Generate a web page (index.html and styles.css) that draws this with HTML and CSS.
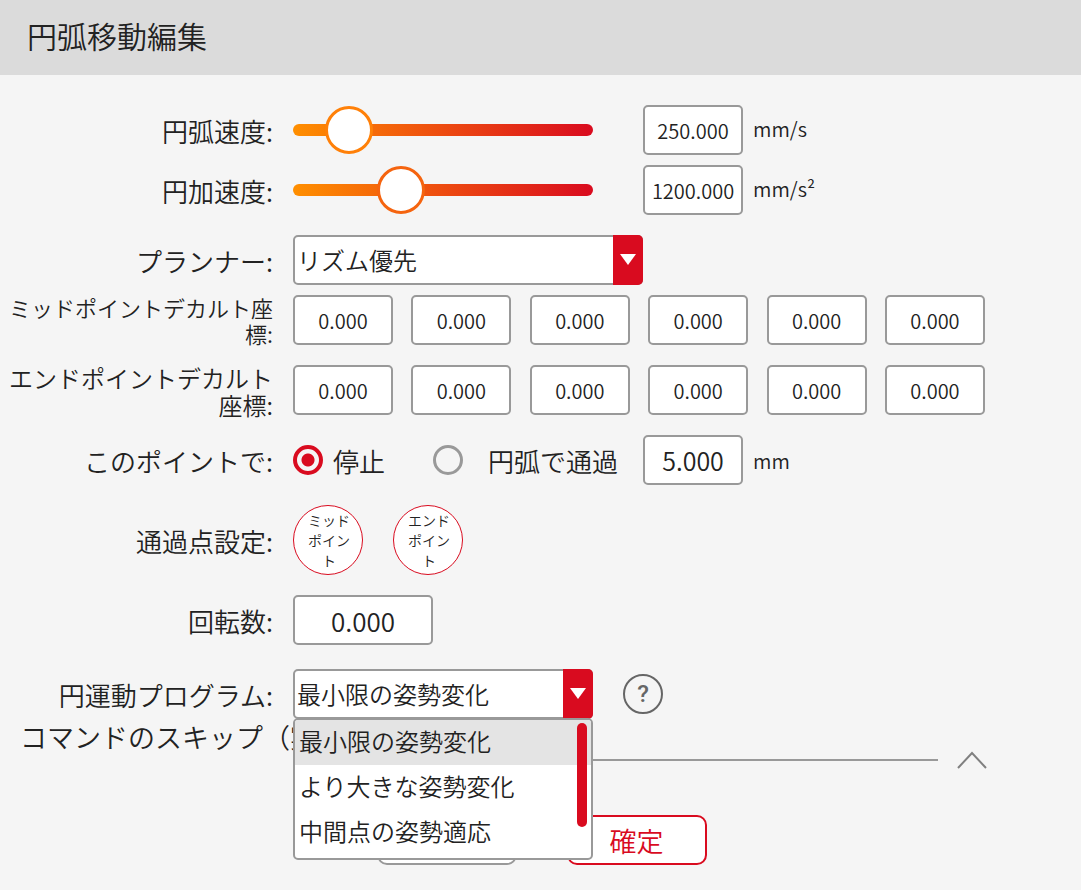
FILE: index.html
```
<!DOCTYPE html>
<html lang="ja">

<head>
    <meta charset="UTF-8">
    <meta name="viewport" content="width=device-width, initial-scale=1.0">
    <title>円弧移動編集</title>
    <link rel="stylesheet" href="styles.css">
</head>

<body>
    <header class="title-bar">
        <h1>円弧移動編集</h1>
    </header>

    <form class="form">
        <div class="row row-tight">
            <label class="row-label" for="speed">円弧速度:</label>
            <input class="slider slider-speed" type="range" id="speed" min="0" max="2000" value="250">
            <input class="value" type="text" value="250.000" aria-label="円弧速度">
            <span class="unit unit-raised">mm/s</span>
        </div>
        <div class="row">
            <label class="row-label" for="acc">円加速度:</label>
            <input class="slider slider-acc" type="range" id="acc" min="0" max="3600" value="1200">
            <input class="value" type="text" value="1200.000" aria-label="円加速度">
            <span class="unit unit-raised">mm/s²</span>
        </div>

        <div class="row row-tight">
            <label class="row-label" for="planner">プランナー:</label>
            <div class="select select-wide">
                <select id="planner">
                    <option>リズム優先</option>
                </select>
            </div>
        </div>

        <div class="row">
            <label class="row-label row-label-small" for="mid_x">ミッドポイントデカルト座標:</label>
            <div class="coords">
                <input class="value" type="text" id="mid_x" value="0.000">
                <input class="value" type="text" value="0.000">
                <input class="value" type="text" value="0.000">
                <input class="value" type="text" value="0.000">
                <input class="value" type="text" value="0.000">
                <input class="value" type="text" value="0.000">
            </div>
        </div>
        <div class="row">
            <label class="row-label row-label-medium" for="end_x">エンドポイントデカルト座標:</label>
            <div class="coords">
                <input class="value" type="text" id="end_x" value="0.000">
                <input class="value" type="text" value="0.000">
                <input class="value" type="text" value="0.000">
                <input class="value" type="text" value="0.000">
                <input class="value" type="text" value="0.000">
                <input class="value" type="text" value="0.000">
            </div>
        </div>

        <div class="row">
            <span class="row-label">このポイントで:</span>
            <input class="radio" type="radio" name="pass" id="pass_stop" checked>
            <label class="radio-label radio-label-stop" for="pass_stop">停止</label>
            <input class="radio" type="radio" name="pass" id="pass_arc">
            <label class="radio-label radio-label-arc" for="pass_arc">円弧で通過</label>
            <input class="value value-radius" type="text" value="5.000" aria-label="半径">
            <span class="unit">mm</span>
        </div>

        <div class="row row-points">
            <span class="row-label">通過点設定:</span>
            <div class="points">
                <button type="button" class="point">ミッドポイント</button>
                <button type="button" class="point">エンドポイント</button>
            </div>
        </div>

        <div class="row row-loose">
            <label class="row-label" for="turns">回転数:</label>
            <input class="value value-turns" type="text" id="turns" value="0.000">
        </div>

        <div class="row row-last">
            <label class="row-label" for="program">円運動プログラム:</label>
            <div class="select">
                <select id="program">
                    <option>最小限の姿勢変化</option>
                    <option>より大きな姿勢変化</option>
                    <option>中間点の姿勢適応</option>
                </select>
                <div class="menu">
                    <ul class="menu-list" role="listbox" aria-label="円運動プログラム">
                        <li class="menu-item active" role="option" aria-selected="true">最小限の姿勢変化</li>
                        <li class="menu-item" role="option">より大きな姿勢変化</li>
                        <li class="menu-item" role="option">中間点の姿勢適応</li>
                    </ul>
                    <div class="menu-scroll"></div>
                </div>
            </div>
            <button type="button" class="help">?</button>
        </div>
    </form>

    <div class="skip">
        <span class="skip-title">コマンドのスキップ（実</span>
        <span class="skip-line"></span>
        <button type="button" class="skip-toggle" aria-label="折りたたむ">
            <svg width="30" height="18" viewBox="0 0 30 18" fill="none" stroke="#808080" stroke-width="2">
                <path d="M1 17L15 2L29 17" />
            </svg>
        </button>
    </div>

    <div class="actions">
        <button type="button" class="btn" aria-label="キャンセル"></button>
        <button type="button" class="btn btn-ok">確定</button>
    </div>
</body>

</html>
```
FILE: styles.css
```
* {
    box-sizing: border-box;
}

body {
    margin: 0;
    background-color: #f5f5f5;
    color: #222;
    font-family: "Noto Sans CJK JP", sans-serif;
    font-size: 26px;
    font-weight: 350;
}

input,
select,
button {
    margin: 0;
    color: inherit;
    font-family: inherit;
    font-weight: inherit;
}

.title-bar {
    display: flex;
    align-items: center;
    height: 75px;
    padding: 0 27px 6px;
    background-color: #dbdbdb;
}

.title-bar h1 {
    margin: 0;
    font-size: 30px;
    font-weight: inherit;
}

.form {
    padding-top: 30px;
}

.row {
    display: flex;
    align-items: center;
    height: 50px;
    margin-bottom: 20px;
}

.row-tight {
    margin-bottom: 10px;
}

.row-points {
    height: 70px;
}

.row-loose {
    margin-bottom: 24px;
}

.row-last {
    margin-bottom: 0;
}

.row-label {
    flex: none;
    width: 273px;
    margin-right: 20px;
    padding-top: 2px;
    line-height: 40px;
    text-align: right;
}

.row-label-small {
    padding-top: 0;
    font-size: 22px;
    line-height: 26px;
}

.row-label-medium {
    font-size: 24px;
    line-height: 27px;
}

/* sliders */
.slider {
    width: 300px;
    height: 48px;
    margin-right: 50px;
    background: none;
    appearance: none;
}

.slider::-webkit-slider-runnable-track {
    height: 12px;
    border-radius: 6px;
    background: linear-gradient(to right, #ff8f00, #ed4b10 50%, #d90b1f);
}

.slider::-webkit-slider-thumb {
    width: 48px;
    height: 48px;
    margin-top: -18px;
    border: 3px solid #ff8008;
    border-radius: 50%;
    background-color: #fff;
    appearance: none;
}

.slider-acc::-webkit-slider-thumb {
    border-color: #f5640f;
}

/* number boxes */
.value {
    width: 100px;
    height: 50px;
    padding: 0;
    border: 2px solid #999;
    border-radius: 5px;
    background-color: #fff;
    font-size: 20px;
    text-align: center;
}

.value-radius {
    font-size: 25px;
}

.value-turns {
    width: 140px;
    font-size: 26px;
}

.unit {
    margin-left: 10px;
    font-size: 20px;
}

.unit-raised {
    padding-bottom: 4px;
}

.coords {
    display: flex;
    justify-content: space-between;
    width: 100%;
    max-width: 692px;
}

/* drop-downs */
.select {
    position: relative;
    display: flex;
    width: 300px;
    height: 50px;
}

.select-wide {
    width: 350px;
}

.select select {
    flex: 1;
    padding: 0 30px 2px 2px;
    border: 2px solid #999;
    border-radius: 5px;
    background-color: #fff;
    font-size: 24px;
    appearance: none;
}

.select::before {
    content: "";
    position: absolute;
    top: 0;
    right: 0;
    width: 30px;
    height: 100%;
    border-radius: 0 5px 5px 0;
    background-color: #d90b1f;
    pointer-events: none;
}

.select::after {
    content: "";
    position: absolute;
    top: 19px;
    right: 7px;
    border: 8px solid transparent;
    border-top: 11px solid #fff;
    border-bottom: none;
    pointer-events: none;
}

.menu {
    position: absolute;
    z-index: 1;
    top: 49px;
    left: 0;
    width: 100%;
    height: 142px;
    border: 2px solid #999;
    border-radius: 5px;
    background-color: #fff;
    overflow: hidden;
}

.menu-list {
    margin: 0;
    padding: 0;
    list-style: none;
}

.menu-item {
    height: 45px;
    padding-left: 4px;
    font-size: 24px;
    line-height: 42px;
}

.menu-item.active {
    background-color: #e4e4e4;
}

.menu-scroll {
    position: absolute;
    top: 3px;
    right: 4px;
    width: 10px;
    height: 104px;
    border-radius: 5px;
    background-color: #d90b1f;
}

.help {
    width: 40px;
    height: 40px;
    margin-left: 30px;
    padding: 0;
    border: 2px solid #666;
    border-radius: 50%;
    background: none;
    color: #666;
    font-family: Roboto, sans-serif;
    font-size: 24px;
    font-weight: 500;
    line-height: 36px;
}

/* radios */
.radio {
    flex: none;
    width: 30px;
    height: 30px;
    border: 3px solid #999;
    border-radius: 50%;
    appearance: none;
}

.radio:checked {
    border: 4px solid #d90b1f;
    background: radial-gradient(circle, #d90b1f 6px, transparent 7px);
}

.radio-label {
    padding-top: 2px;
    line-height: 40px;
}

.radio-label-stop {
    margin: 0 48px 0 10px;
}

.radio-label-arc {
    margin: 0 25px;
}

.points {
    display: flex;
    gap: 30px;
}

.point {
    width: 70px;
    height: 70px;
    padding: 0 11px 0 13px;
    border: 1px solid #d90b1f;
    border-radius: 50%;
    background-color: #fff;
    font-size: 14px;
    line-height: 20px;
}

.skip {
    display: flex;
    align-items: flex-end;
    height: 50px;
    padding: 0 94px 0 20px;
}

.skip-title {
    align-self: flex-start;
    font-size: 27px;
    line-height: 36px;
    white-space: nowrap;
}

.skip-line {
    flex: 1;
    height: 2px;
    margin: 0 19px 8px 0;
    background-color: #999;
}

.skip-toggle {
    display: flex;
    padding: 0;
    border: none;
    background: none;
}

.actions {
    display: flex;
    justify-content: center;
    gap: 50px;
    padding: 46px 0 25px 2px;
}

.btn {
    width: 140px;
    height: 50px;
    padding: 0;
    border: 2px solid #999;
    border-radius: 10px;
    background-color: #fff;
    font-size: 27px;
}

.btn-ok {
    border-color: #d90b1f;
    color: #d90b1f;
}
```
